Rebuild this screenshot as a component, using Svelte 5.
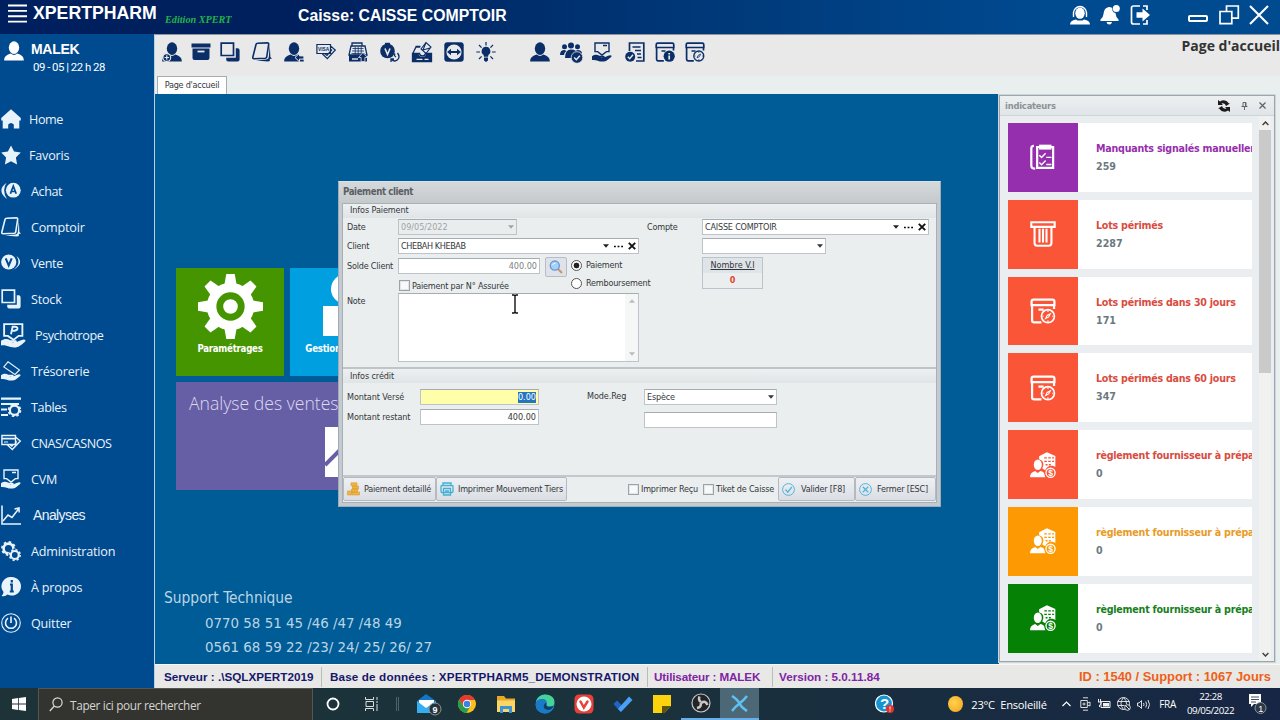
<script lang="ts">
	// All icons are drawn on a 20x20 grid
	const person =
		'<ellipse cx="10" cy="6.600" rx="5.200" ry="6.300"/><path d="M.2 19.600c0-4.300 2.600-5.600 6.600-7 1.800 1.700 4.600 1.700 6.400 0 4 1.400 6.600 2.700 6.600 7z"/>';
	const hand =
		'<path d="M0 14.200c3-2 5.200-1.600 7.400-.4h4c1.800 0 1.600 2-.1 2H8.500c3 1 6.600-2.400 9.600-2.600 1.500 0 2 .8 1 1.700-2.300 1.900-4.700 4.700-8.600 4.700C6 19.600 4.500 17.400 0 18z"/>';
	const stack =
		'<path d="M1.200 1.200h12.300v12.300H1.200z" fill="none" stroke="currentColor" stroke-width="1.700"/><path d="M15.800 6.200h1.800q2 0 2 2v9.400q0 2-2 2H8.200q-2 0-2-2v-1.800h9.600z"/>';
	const book =
		'<path d="M5.500 1.300 15.500.9q1.300 0 1.200 1.200L14.700 15q-.2 1.100-1.500 1.200L2 16.700q-1.500 0-1.200-1.400L4 2.500q.3-1.200 1.500-1.200z" fill="none" stroke="currentColor" stroke-width="1.600"/><path d="m17.800 3 .6 12 1.600 1.600-2.200.3v2.200l-1.800.5-12-1.200 10.600-.8q2.100-.5 2.200-2.600z"/>';
	const card =
		'<path d="M.9 2.500h13.600v9H.9zM14.500 4l4.800 4-8 8.600-5-4.800" fill="none" stroke="currentColor" stroke-width="1.400"/><path d="M1 4.800h13v1.700H1zM3 8.500h4v1H3z"/><path d="m16.500 7-5.500 7-3-2.300h7z"/>';
	const visa =
		'<path d="M.9 2.500h13.600v9H.9zM14.500 4l4.800 4-8 8.600-5-4.800M16 7.500l-5 6-2.500-2" fill="none" stroke="currentColor" stroke-width="1.200"/><text x="2" y="8.800" font-size="4.800" font-weight="bold" font-family="Liberation Sans">VISA</text>';
	const calBox =
		'<path d="M1.200 5.500V2.800q0-1.600 1.600-1.600h14.400q1.600 0 1.600 1.600v2.700zM1.600 5.500v11.600q0 1.700 1.700 1.700h5.500M18.500 5.500v3M6.500 9h4" fill="none" stroke="currentColor" stroke-width="1.700"/>';
	const clock =
		'<circle cx="13.800" cy="14" r="5" fill="none" stroke="currentColor" stroke-width="1.300"/><path d="m12 15.800 1.200-2.400 2.500-1.300-1.300 2.500zM13.800 9.500v1.300M13.800 17.200v1.300M9.500 14h1M17 14h1" fill="none" stroke="currentColor" stroke-width=".8"/>';
	const teeth = [0, 45, 90, 135, 180, 225, 270, 315]
		.map((angle) => `<path d="M8.700 0h2.600l.7 4H8z" transform="rotate(${angle} 10 10)"/>`)
		.join('');
	const cvm =
		'<path d="M3 1h14v8.600h-2.600L10 13 5.600 9.600H3zM11 3.500h4" fill="none" stroke="currentColor" stroke-width="1.400"/>' + hand;
	const supplier =
		'<path d="m7 3.200 6-3 6.500 2.800v8.600a5 5 0 0 0-7.800 2.500L9.500 12.600Q12 7 7 5.500z"/><path d="M11 4.500h2m1 0h2m1 0h1.500M11 7.200h2m1 0h2m1 0h1.500M12 9.800h1.500m1 0H16" stroke="var(--cut)" stroke-width="1.100"/><ellipse cx="6" cy="9.800" rx="3.100" ry="4"/><path d="M0 19.500q0-3.800 4-4.800l2 1.500 2-1.500q3 .6 3 2.300l.8 2.500z"/><circle cx="15.800" cy="16" r="3.500" fill="none" stroke="currentColor" stroke-width="1"/><text x="14" y="18.300" font-size="6.500" font-weight="bold" font-family="Liberation Sans">$</text>';

	const icons: Record<string, string> = {
		menu: '<path d="M0 .5h20v2H0zm0 5.700h20v2H0zm0 5.700h20v2H0zm0 5.700h20v2H0z"/>',
		user: person,
		userPlus:
			person +
			'<circle cx="4.800" cy="15.500" r="3.900" fill="currentColor" stroke="var(--cut)" stroke-width="1.100"/><path d="M2.500 15.500h4.600M4.800 13.200v4.600" stroke="var(--cut)" stroke-width="1.200"/>',
		userBack:
			person +
			'<path d="m11 15.500 4.500-4.200v2.600h4.400v3.200h-4.400v2.700z" stroke="var(--cut)" stroke-width="1"/>',
		archive:
			'<path d="M.5 1.500h19v4H.5zM1.500 6.500h17V16q0 2-2 2h-13q-2 0-2-2z"/><path d="M6.500 9.500h7" stroke="var(--cut)" stroke-width="1.800"/>',
		stack,
		book,
		card,
		visa,
		register:
			'<path d="M4 4V1h10v3M3 4h14l2 9H1z" fill="none" stroke="currentColor" stroke-width="1.300"/><path d="M4.500 6.500h11M4 9h12M3.500 11.500h13M7.200 5v8M10.200 5v8M13.200 5v8" stroke="currentColor" stroke-width=".8"/><path d="M1 13h18v6.500H1z"/><path d="M4 17h6" stroke="var(--cut)" stroke-width="1.400"/><path d="m15 10.500 4.500 5h-2.600v4h-3.800v-4h-2.600z" stroke="var(--cut)" stroke-width=".8"/>',
		coinV:
			'<circle cx="7.500" cy="9" r="7.300"/><path d="M5 .8h5v3H5z"/><path d="m5 6.500 2.500 6 2.500-6" fill="none" stroke="var(--cut)" stroke-width="1.600"/><path d="M17.500 11q3 4 0 6.800t-6.500-.8M11 20v-3h3M15 11.500q-1.500 2 1 3.500" fill="none" stroke="currentColor" stroke-width="1.300"/>',
		drawer:
			'<path d="M3.500 4.500h5M1 11l3-6h4M.5 11.500h7q.5 2.500 3 2.500t3-2.500h6v8H.5z" fill="none" stroke="currentColor" stroke-width="1.300"/><path d="M.5 12h6q1 3 4 3t3.500-3h5.500v7.500H.5z"/><path d="M4.500 17.300h6M12.500 17.300h4" stroke="var(--cut)" stroke-width="1.200"/><path d="m9 7 5-6.500L19 5l-5 6.500zM14 .5 11 8l7-2" fill="none" stroke="currentColor" stroke-width="1.100"/>',
		teamviewer:
			'<rect x=".3" y=".3" width="19.400" height="19.400" rx="3"/><circle cx="10" cy="10" r="7.600" fill="var(--cut)"/><path d="m3 10 4-3.300v2.200h6V6.700l4 3.300-4 3.300v-2.200H7v2.200z"/>',
		bulb: '<path d="M10 4.800a4.400 4.400 0 0 0-2.500 8l.5 2h4l.5-2a4.400 4.400 0 0 0-2.500-8zM8 15.500h4v3l-2 1.500-2-1.500z"/><path d="M10 0v3.500M.3 10H4M16 10h3.700M3 3l2.600 2.600M17 3l-2.600 2.600M3 17l2.600-2.600M17 17l-2.600-2.600" stroke="currentColor" stroke-width="1.200"/>',
		group:
			'<circle cx="10" cy="3.500" r="3"/><circle cx="3.500" cy="4.800" r="2.500"/><circle cx="16.500" cy="4.800" r="2.500"/><path d="M-1 13q0-5 4.500-5l2 1q-2.500 1.500-2.500 4zM21 11.500q0-3.500-4.500-3.500l-2 1q2 1.500 2 3zM4 16q0-8.500 6-8.500t6 5l-5 3.500z"/><circle cx="16" cy="15.500" r="5.800" stroke="var(--cut)" stroke-width=".8"/><path d="m13.200 15.500 2.100 2.200 3.600-4" fill="none" stroke="var(--cut)" stroke-width="1.500"/>',
		cvm,
		listCheck:
			'<path d="M4.500 9V1h14.300v18H11" fill="none" stroke="currentColor" stroke-width="1.700"/><path d="M7.500 5h8M10 8.500h6M12 12h4M12.500 15.500h4" stroke="currentColor" stroke-width="1.500"/><circle cx="5.200" cy="14.800" r="5"/><path d="m2.800 14.800 1.900 2 3.300-4" fill="none" stroke="var(--cut)" stroke-width="1.400"/>',
		calInfo:
			calBox +
			'<circle cx="14.200" cy="14.200" r="5.600"/><path d="M14.200 11v1.500m0 1v4" stroke="var(--cut)" stroke-width="1.700"/>',
		calClock: calBox + clock,
		support:
			'<path d="M3.500 9.500V8a6.500 6.500 0 0 1 13 0v1.500M3.500 7v5M16.500 7v5" fill="none" stroke="currentColor" stroke-width="1.400"/><ellipse cx="10" cy="8.200" rx="4.700" ry="5.600"/><path d="M0 19.500q0-4 6-5l1.500 1h5l1.500-1q6 1 6 5z"/>',
		bell: '<path d="M9 2q-5 .5-5.500 7-.3 4-3 5.500V16h18v-1.500Q15.700 12 15.500 8 12 7.500 12.200 3 11 2 9 2zM6.500 17h5.500q-.5 2.500-2.700 2.500T6.500 17z"/><circle cx="16.300" cy="3.600" r="3.500"/>',
		exit: '<path d="M10 1H3.500Q1.500 1 1.500 3v14q0 2 2 2H10M13 1h4v4M13 19h4v-4" fill="none" stroke="currentColor" stroke-width="1.700"/><path d="M6.500 7.200h6V3.500l7.500 6.500-7.500 6.500v-3.700h-6z"/>',
		restore:
			'<path d="M1 6.500h11.800v12.200H1zM7.500 6V1h11.800v12.200H13" fill="none" stroke="currentColor" stroke-width="1.700"/>',
		close: '<path d="m1 1 18 18M19 1 1 19" stroke="currentColor" stroke-width="2.100"/>',
		home: '<path d="M10 .2 19.800 9v2.500h-1.500v8h-5.500v-4q-2.800-3-5.600 0v4H1.700v-8H.2V9z"/>',
		star: '<path d="m10 .4 3.100 6.200 6.700 1-4.900 4.900 1.200 7-6.100-3.300-6.100 3.300 1.200-7L.2 7.600l6.700-1z"/>',
		achat:
			'<circle cx="12.300" cy="9.200" r="7.400"/><path d="M5.500 1.800Q-5 9.500 6 18 .5 9.500 5.500 1.800z"/><path d="m9.400 12.700 2.900-7.500 2.900 7.500M10.400 10.500h3.800" fill="none" stroke="var(--cut)" stroke-width="1.700"/>',
		vente:
			'<circle cx="7.700" cy="9" r="7.600"/><path d="M15.500 3q9 7.500-4.500 14.500 10-6 4.500-14.500z"/><path d="m4.700 5.400 3 7 3-7" fill="none" stroke="var(--cut)" stroke-width="2"/>',
		psycho:
			'<path d="M2.500.9h14.600v9.400h-3L10 13.500l-4.500-3.200h-3z" fill="none" stroke="currentColor" stroke-width="1.500"/><path d="m8 9 1.300-6h2.200q2.300.3 1.500 2-.7 1.400-4 1.300" fill="none" stroke="currentColor" stroke-width="1.500"/>' +
			hand,
		cash: '<path d="M7 .8 18.500 9l-4.500 4.500L2.800 6z" fill="none" stroke="currentColor" stroke-width="1.100"/>' + hand,
		tables:
			'<path d="M0 .5h20v2.300H0zM0 6h18v2H0zM0 11.500h6v2H0zM0 17h7v2H0z"/><circle cx="13.500" cy="13.300" r="4.600" fill="none" stroke="currentColor" stroke-width="2.200"/><circle cx="13.500" cy="13.300" r="6" fill="none" stroke="currentColor" stroke-width="1.600" stroke-dasharray="2.500 2.210"/>',
		chart:
			'<path d="M1 .5V19h19" fill="none" stroke="currentColor" stroke-width="1.600"/><path d="m2 16 5-6 4 2.500L17.500 4M13.500 4l4.500-1 .2 4.500" fill="none" stroke="currentColor" stroke-width="1.500"/>',
		admin:
			'<circle cx="7.500" cy="7.500" r="4.900" fill="none" stroke="currentColor" stroke-width="2.600"/><circle cx="7.500" cy="7.500" r="6.600" fill="none" stroke="currentColor" stroke-width="1.700" stroke-dasharray="2.600 2.580"/><circle cx="13.800" cy="14" r="6.400" fill="var(--cut)"/><circle cx="13.800" cy="14" r="4" fill="none" stroke="currentColor" stroke-width="2.200"/><circle cx="13.800" cy="14" r="5.400" fill="none" stroke="currentColor" stroke-width="1.500" stroke-dasharray="2.120 2.120"/>',
		info: '<path d="M10.700 0a9.300 9.300 0 1 1-4.200 17.600Q4 20 .5 19q2-1.500 2-4A9.300 9.300 0 0 1 10.700 0z"/><path d="M10.800 3v2.500m-1.800 2h1.800v7m-2 0h4" fill="none" stroke="var(--cut)" stroke-width="2.200"/>',
		power:
			'<circle cx="10" cy="10" r="9.300" fill="none" stroke="currentColor" stroke-width="1.100"/><path d="M7 5.200a5.500 5.500 0 1 0 6 0M10 3.500V10" fill="none" stroke="currentColor" stroke-width="1.600"/>',
		checklist:
			'<path d="M5.500 2.300h12.300v16H5.500zM3 1.500Q1 1.500 1 3.500v13q0 2.500 3 2.500" fill="none" stroke="currentColor" stroke-width="1.700"/><path d="M7 .5h9.500v3.800H7z"/><path d="m7.200 8.700 1.700 1.700L12 7.200m-4.800 7 1.700 1.700 3.100-3.200M12.500 10.300h4M12.500 15.700h4" fill="none" stroke="currentColor" stroke-width="1.100"/>',
		bin: '<path d="M1 1h18v3.500H1zM3.500 5v12q0 2 2 2h9q2 0 2-2V5M7.300 6v10.500M10 6v10.500M12.700 6v10.500" fill="none" stroke="currentColor" stroke-width="1.600"/>',
		supplier,
		gear:
			'<circle cx="10" cy="10" r="7.300"/>' +
			teeth +
			'<circle cx="10" cy="10" r="3.300" fill="none" stroke="var(--cut)" stroke-width="2.100"/>'
	};

	const tools = [
		['userPlus', 0], ['archive', 9], ['stack', 9], ['book', 12], ['userBack', 12], ['visa', 12],
		['register', 12], ['coinV', 12], ['drawer', 12], ['teamviewer', 12], ['bulb', 12],
		['user', 34], ['group', 11], ['cvm', 11], ['listCheck', 13], ['calInfo', 10], ['calClock', 10]
	] as [string, number][];

	const menu = [
		['home', 'Home'], ['star', 'Favoris'], ['achat', 'Achat'], ['book', 'Comptoir'], ['vente', 'Vente'],
		['stack', 'Stock'], ['psycho', 'Psychotrope'], ['cash', 'Trésorerie'], ['tables', 'Tables'],
		['card', 'CNAS/CASNOS'], ['cvm', 'CVM'], ['chart', 'Analyses'], ['admin', 'Administration'],
		['info', 'À propos'], ['power', 'Quitter']
	];

	const indicators = [
		{ icon: 'checklist', label: 'Manquants signalés manuellement', value: 259, tone: 'purple' },
		{ icon: 'bin', label: 'Lots périmés', value: 2287, tone: 'red' },
		{ icon: 'calClock', label: 'Lots périmés dans 30 jours', value: 171, tone: 'red' },
		{ icon: 'calClock', label: 'Lots périmés dans 60 jours', value: 347, tone: 'red' },
		{ icon: 'supplier', label: 'règlement fournisseur à préparer', value: 0, tone: 'red' },
		{ icon: 'supplier', label: 'règlement fournisseur à préparer', value: 0, tone: 'orange' },
		{ icon: 'supplier', label: 'règlement fournisseur à préparer', value: 0, tone: 'green' }
	];

	let mode = $state('Paiement');
</script>

{#snippet icon(name: string, size = 20)}
	<svg class="icon" width={size} height={size} viewBox="0 0 20 20" fill="currentColor">{@html icons[name]}</svg>
{/snippet}

{#snippet arrow()}
	<svg class="arrow" width="6" height="4" viewBox="0 0 6 4"><path d="M0 .3h6L3 3.700z" fill="currentColor" /></svg>
{/snippet}

{#snippet lookup()}
	<span class="lookup">
		{@render arrow()}
		<svg width="9" height="3" viewBox="0 0 9 3"><path d="M0 .7h1.800v1.600H0zm3.600 0h1.800v1.600H3.600zm3.600 0H9v1.600H7.200z" /></svg>
		<svg width="8" height="8" viewBox="0 0 8 8"><path d="m.8.8 6.400 6.400M7.200.8.8 7.200" stroke="#111" stroke-width="1.900" /></svg>
	</span>
{/snippet}

<div class="app">
	<header class="titlebar">
		{@render icon('menu', 19)}
		<strong class="brand">XPERTPHARM</strong>
		<em class="edition">Edition XPERT</em>
		<strong class="caisse">Caisse: CAISSE COMPTOIR</strong>
		<div class="window-actions">
			{@render icon('support')}
			{@render icon('bell')}
			{@render icon('exit')}
			<span class="minimize"></span>
			{@render icon('restore')}
			{@render icon('close')}
		</div>
	</header>

	<div class="body">
		<aside class="sidebar">
			<div class="account">
				{@render icon('user')}
				<div>
					<div class="name">MALEK</div>
					<div class="date">09 - 05 | 22 h 28</div>
				</div>
			</div>
			<nav>
				{#each menu as [name, label]}
					<a class="item item-{name}" href="#{name}">
						{@render icon(name, name === 'psycho' ? 25 : 20)}
						<span>{label}</span>
					</a>
				{/each}
			</nav>
		</aside>

		<main class="main">
			<div class="toolbar">
				{#each tools as [name, gap]}
					<span class="tool" style:margin-left="{gap}px">{@render icon(name)}</span>
				{/each}
				<h1>Page d'accueil</h1>
			</div>
			<div class="tabs"><span class="tab">Page d'accueil</span></div>

			<div class="content">
				<section class="desktop">
					<div class="tiles">
						<div class="tile settings">{@render icon('gear', 65)}<b>Paramétrages</b></div>
						<div class="tile stock">
							<svg width="62" height="65" viewBox="0 0 62 65" fill="#fff"><circle cx="33" cy="15" r="15" /><path d="M10 32h44v30H10z" /></svg>
							<b>Gestion de stock</b>
						</div>
						<div class="tile sales">
							<span>Analyse des ventes</span>
							<svg width="50" height="50" viewBox="0 0 50 50"><path d="M0 0h50v50H0z" fill="#fff" /><path d="m0 38 16-16 12 10L50 8" fill="none" stroke="#675fa6" stroke-width="4" /></svg>
						</div>
					</div>
					<div class="contact">
						<div>Support Technique</div>
						<p>0770 58 51 45 /46 /47 /48 49</p>
						<p>0561 68 59 22 /23/ 24/ 25/ 26/ 27</p>
					</div>
				</section>

				<aside class="indicators">
					<div class="panel-head">
						<b>indicateurs</b>
						<svg width="14" height="12" viewBox="0 0 14 12"><path d="M1 5V0l2 1.500Q8-2 12 3.500h1L9 6Q8 2.500 4.500 3.500L6 5zM13 7v5l-2-1.500Q6 14 2 8.500H1L5 6q1 3.500 4.500 2.500L8 7z" fill="#1c1c1c" /></svg>
						<svg width="7" height="8" viewBox="0 0 7 8"><path d="M2 .5h3v4H2zM.5 4.500h6M3.500 5v3M4.500 1v3" fill="none" stroke="#60666b" /></svg>
						<svg width="7" height="7" viewBox="0 0 7 7"><path d="m.5.5 6 6M6.500.5l-6 6" stroke="#60666b" stroke-width="1.300" /></svg>
					</div>
					<div class="panel-body">
						<div class="cards">
							{#each indicators as item}
								<article class="card {item.tone}">
									<div class="card-icon">{@render icon(item.icon, 26)}</div>
									<div class="card-text">
										<b>{item.label}</b>
										<span>{item.value}</span>
									</div>
								</article>
							{/each}
						</div>
						<div class="scrollbar">
							<svg width="7" height="5" viewBox="0 0 7 5"><path d="m.6 4 2.900-3 2.900 3" fill="none" stroke="#444" stroke-width="1.500" /></svg>
							<span class="thumb"></span>
							<svg width="7" height="5" viewBox="0 0 7 5"><path d="m.6 1 2.900 3 2.900-3" fill="none" stroke="#444" stroke-width="1.500" /></svg>
						</div>
					</div>
				</aside>
			</div>

			<footer class="status">
				<b class="server">Serveur : .\SQLXPERT2019</b>
				<b class="database">Base de données : XPERTPHARM5_DEMONSTRATION</b>
				<b class="login">Utilisateur : MALEK</b>
				<b class="version">Version : 5.0.11.84</b>
				<b class="licence">ID : 1540 / Support : 1067 Jours</b>
			</footer>
		</main>
	</div>

	<footer class="taskbar">
		<span class="start"><svg width="14" height="14" viewBox="0 0 14 14" fill="#fff"><path d="m0 2 6-1v5.600H0zM6.800.9 14 0v6.600H6.800zM0 7.400h6V13l-6-1zM6.800 7.400H14V14l-7.200-1z" /></svg></span>
		<div class="search">
			<svg width="14" height="15" viewBox="0 0 14 15"><circle cx="8.500" cy="5.500" r="4.600" fill="none" stroke="#ddd" stroke-width="1.200" /><path d="M5.300 9 .8 14" stroke="#ddd" stroke-width="1.200" /></svg>
			Taper ici pour rechercher
		</div>
		<span class="slot"><svg width="14" height="14" viewBox="0 0 14 14"><circle cx="7" cy="7" r="5.500" fill="none" stroke="#fff" stroke-width="1.800" /></svg></span>
		<span class="slot"><svg width="14" height="14" viewBox="0 0 14 14" fill="none" stroke="#ddd"><path d="M.5 0v2.500h8V0M.5 14v-2.500h8V14M1 4.500h7.500v5H1zM12 0v3M12 7v7M11 5h2" /></svg></span>
		<span class="divider"></span>
		<span class="slot">
			<svg width="28" height="26" viewBox="0 0 28 26"><path d="m3 10 9-7 10 7v12H3z" fill="#1175c8" /><path d="M5 9h15v8H5z" fill="#fff" /><path d="m3 10 9 7 10-7v12H3z" fill="#35aef1" /><circle cx="21" cy="18" r="6" fill="#25323a" stroke="#8b9499" /><text x="18.500" y="21.500" font-size="9" font-weight="bold" font-family="Liberation Sans" fill="#fff">9</text></svg>
		</span>
		<span class="slot">
			<svg width="18" height="18" viewBox="0 0 18 18"><circle cx="9" cy="9" r="9" fill="#fbc116" /><path d="M1.200 4.500A9 9 0 0 1 17 5H9L5 11z" fill="#e33b2e" /><path d="M1.200 4.500A9 9 0 0 0 8.500 18l4-7-7 .5z" fill="#2a9d48" /><circle cx="9" cy="9" r="4.200" fill="#fff" /><circle cx="9" cy="9" r="3.300" fill="#3f7fe8" /></svg>
		</span>
		<span class="slot">
			<svg width="18" height="17" viewBox="0 0 18 17"><path d="M0 0h7l2 2.500h9V16H0z" fill="#e9a825" /><path d="M0 4.500h18V16H0z" fill="#fcd665" /><path d="M3 17V10h12v7h-3v-4H6v4z" fill="#3b94d9" /></svg>
		</span>
		<span class="slot">
			<svg width="20" height="20" viewBox="0 0 20 20"><circle cx="10" cy="10" r="9.500" fill="#1787cf" /><path d="M1 8Q3 .5 10 .5q9 0 9.500 7.500 0 4.500-5 4.500-3 0-2.500-2Q12.500 5 7 5 3 5 1 8z" fill="#45d39a" /><path d="M.6 11Q1 5 7 5q4.500.5 4.500 4-3.500.5-2.500 4t7 3.500q-2.500 3-6 3Q1 19 .6 11z" fill="#1b79c9" /><path d="M11.500 9q-1.500 3.500 3 3.700l4-.7q-1.500 4-5.500 4-5.500-1-4-5 .5-2 2.500-2z" fill="#123d66" /></svg>
		</span>
		<span class="slot">
			<svg width="20" height="20" viewBox="0 0 20 20"><rect x=".5" y=".5" width="19" height="19" rx="4.500" fill="#e8413b" /><circle cx="10" cy="10" r="7.500" fill="#fff" /><path d="m6.500 7.500 3.300 6 3.700-6" fill="none" stroke="#e8413b" stroke-width="2.500" stroke-linecap="round" /></svg>
		</span>
		<span class="slot">
			<svg width="20" height="18" viewBox="0 0 20 18"><path d="m.5 9 3.500-3.500 5 5L7.500 17z" fill="#2264c5" /><path d="M5 14 16 1.500 19.500 5 8 17z" fill="#4ba0f5" /></svg>
		</span>
		<span class="slot">
			<svg width="18" height="18" viewBox="0 0 18 18"><path d="M0 0h18v18H0z" fill="#fcd20c" /><path d="M9 11h9l-6.500 7H9z" fill="#5b5210" /><path d="m18 11-6.500 7H18z" fill="#1b303e" /></svg>
		</span>
		<span class="slot running">
			<svg width="20" height="20" viewBox="0 0 20 20"><circle cx="10" cy="10" r="9" fill="#242427" stroke="#c7c8ca" stroke-width="1.200" /><path d="M10 9Q7 7 8.500 3.500M9.500 10Q11 14 6 15M10.500 10q4-3 6 2" fill="none" stroke="#c7c8ca" stroke-width="2.500" /></svg>
		</span>
		<span class="slot running active">
			<svg width="17" height="17" viewBox="0 0 17 17"><path d="M1 1q6 4 7.500 7.500Q10 12 16 16M16 1q-4 5-7.500 7.500T1 16" fill="none" stroke="#5ec1f0" stroke-width="2.600" /></svg>
		</span>

		<div class="tray">
			<svg class="help" width="19" height="20" viewBox="0 0 19 20"><circle cx="9" cy="9.500" r="8.500" fill="#1594d1" stroke="#fff" stroke-width="1.200" /><text x="5" y="15" font-size="15" font-weight="bold" font-family="Liberation Sans" fill="#fff">?</text><circle cx="15" cy="15" r="4" fill="#e4322c" /><path d="M15 12.500v3m0 1v1" stroke="#fff" /></svg>
			<span class="sun"></span>
			<span class="weather">23°C&nbsp; Ensoleillé</span>
			<svg width="9" height="6" viewBox="0 0 9 6"><path d="m.5 5 4-4 4 4" fill="none" stroke="#fff" stroke-width="1.200" /></svg>
			<svg class="meet" width="11" height="14" viewBox="0 0 11 14" fill="none" stroke="#ddd"><path d="M3 .8h5M3 13.200h5M.8 3.500h6.500v7H.8zM7.500 6l2.500-1v4L7.500 8" /><circle cx="4" cy="7" r="1" /></svg>
			<svg width="14" height="10" viewBox="0 0 14 10"><path d="M4 2.500h9v6H4zM1.500 0v3M3.500 0v3M1 3h3v2L2.500 6v2" fill="none" stroke="#eee" /><path d="M6 4h6v3.500H6z" fill="#eee" /></svg>
			<svg width="14" height="14" viewBox="0 0 14 14" fill="none" stroke="#ddd"><circle cx="6.500" cy="6.500" r="6" /><path d="M.5 4.500h12M.5 8.500h7M6.500.5q-5 6 0 12M6.500.5q3.500 3 3 6.500" /><circle cx="10.500" cy="10.500" r="2.800" fill="#182a42" /><path d="m8.500 8.500 4 4" /></svg>
			<svg width="14" height="11" viewBox="0 0 14 11" fill="none" stroke="#ddd"><path d="M.5 4H2l2.500-2.500v8L2 7H.5zM6.500 4q1 1.500 0 3M8.700 2.500q2 3 0 6M11 1q3 4.500 0 9" /></svg>
			<span class="lang">FRA</span>
			<div class="clock"><span>22:28</span><span>09/05/2022</span></div>
			<svg class="notice" width="20" height="22" viewBox="0 0 20 22"><path d="M1 1h12v10H6l-3 3v-3H1z" fill="#fff" /><path d="M3 4h8M3 6.500h8M3 9h5" stroke="#44505f" /><circle cx="12.500" cy="15" r="5.500" fill="#2c3844" stroke="#8a939c" /><text x="10.200" y="18.500" font-size="9" font-family="Liberation Sans" fill="#fff">1</text></svg>
		</div>
	</footer>

	<div class="dialog">
		<div class="dialog-title">Paiement client</div>
		<div class="dialog-body">
			<div class="group-title">Infos Paiement</div>
			<div class="payment">
				<div class="left">
					<div class="row"><label for="date">Date</label><div id="date" class="field date-field">09/05/2022 {@render arrow()}</div></div>
					<div class="row"><label for="client">Client</label><div id="client" class="field wide">CHEBAH KHEBAB {@render lookup()}</div></div>
					<div class="balance">
						<div>
							<div class="row">
								<label for="solde">Solde Client</label>
								<div id="solde" class="field amount muted">400.00</div>
								<button class="find" aria-label="Rechercher">
									<svg width="14" height="14" viewBox="0 0 14 14"><path d="m9 9 4 4" stroke="#c99a68" stroke-width="2.300" /><circle cx="5.800" cy="5.600" r="4.600" fill="#a5d1f5" stroke="#6997d5" stroke-width="1.300" /><path d="M3.500 5q1-2 3-1.800" fill="none" stroke="#fff" /></svg>
								</button>
							</div>
							<div class="check insured"><i class="box"></i>Paiement par N° Assurée</div>
						</div>
						<div class="radios">
							{#each ['Paiement', 'Remboursement'] as option}
								<button class="radio" onclick={() => (mode = option)}><i class:on={mode === option}></i>{option}</button>
							{/each}
						</div>
					</div>
					<div class="row note"><label for="note">Note</label>
						<div id="note" class="field memo"><span class="memo-scroll"><i class="up">{@render arrow()}</i>{@render arrow()}</span></div>
					</div>
				</div>
				<div class="right">
					<div class="row"><label for="compte">Compte</label><div id="compte" class="field account-field">CAISSE COMPTOIR {@render lookup()}</div></div>
					<div class="field sub-account">{@render arrow()}</div>
					<div class="counter"><u>Nombre V.I</u><b>0</b></div>
				</div>
			</div>

			<div class="group-title credit-title">Infos crédit</div>
			<div class="credit">
				<div>
					<div class="row"><label for="verse">Montant Versé</label><div id="verse" class="field amount paid"><mark>0.00</mark></div></div>
					<div class="row"><label for="restant">Montant restant</label><div id="restant" class="field amount">400.00</div></div>
				</div>
				<span class="mode-label">Mode.Reg</span>
				<div>
					<div class="field mode">Espèce {@render arrow()}</div>
					<div class="field mode"></div>
				</div>
			</div>

			<div class="actions">
				<button class="detail">
					<svg width="14" height="14" viewBox="0 0 14 14" fill="#f0b43c" stroke="#d99a35" stroke-width=".6"><path d="M4 .8h6v3H4zM5.500 4h6v3h-6zM4.500 7h6v3h-6zM5 10h7.500v3H5zM.5 9h4v4h-4z" /></svg>
					Paiement detaillé
				</button>
				<button class="print">
					<svg width="14" height="14" viewBox="0 0 14 14" fill="none" stroke="#42afd5" stroke-width="1.300"><path d="M3 3V1h8v2M1 4.500q0-1 1-1h10q1 0 1 1v5q0 1-1 1H2q-1 0-1-1z" /><path d="M3.500 6.500h7V13h-7zM5 9h4" /></svg>
					Imprimer Mouvement Tiers
				</button>
				<span class="check receipt"><i class="box"></i>Imprimer Reçu</span>
				<span class="check ticket"><i class="box"></i>Tiket de Caisse</span>
				<button class="submit">
					<svg width="13" height="13" viewBox="0 0 13 13" fill="none" stroke="#55b4dd"><circle cx="6.500" cy="6.500" r="5.900" /><path d="m3.500 6.500 2.300 2.700 4-5.200" stroke-width="1.300" /></svg>
					Valider [F8]
				</button>
				<button class="cancel">
					<svg width="13" height="13" viewBox="0 0 13 13" fill="none" stroke="#55b4dd"><circle cx="6.500" cy="6.500" r="5.900" /><path d="m3.800 3.800 5.400 5.400M9.200 3.800 3.800 9.200" stroke-width="1.300" /></svg>
					Fermer [ESC]
				</button>
			</div>
		</div>
		<svg class="caret" width="8" height="20" viewBox="0 0 8 20"><path d="M1 1h2l1 1 1-1h2M4 2v16M1 19h2l1-1 1 1h2" fill="none" stroke="#111" stroke-width="1.400" /></svg>
	</div>
</div>

<style>
	:global(body) {
		overflow: hidden;
	}

	.app {
		position: relative;
		display: grid;
		grid-template-rows: 34px 654px 32px;
		width: 1280px;
		height: 720px;
		overflow: hidden;
		font-family: 'DejaVu Sans Condensed', 'DejaVu Sans', sans-serif;
		font-size: 9px;
		color: #33373b;

		& * {
			box-sizing: border-box;
		}
	}

	svg {
		display: block;
		flex: none;
	}

	.icon {
		overflow: visible;
	}

	button {
		font: inherit;
		color: inherit;
		letter-spacing: inherit;
		padding: 0;
	}

	.titlebar {
		display: flex;
		padding-left: 8px;
		color: #fff;
		background: linear-gradient(90deg, #001f5e 0, #00205d 300px, #003878 700px, #004a90 1050px);
		font-family: 'Liberation Sans', sans-serif;
		white-space: nowrap;

		& > .icon {
			margin-top: 4px;
		}
	}

	.brand {
		width: 132px;
		margin-left: 6px;
		font-size: 17.7px;
		line-height: 26px;
	}

	.edition {
		width: 133px;
		color: #20b448;
		font: italic bold 10.2px/40px 'Liberation Serif', serif;
	}

	.caisse {
		font-size: 15.8px;
		line-height: 31px;
	}

	.window-actions {
		display: flex;
		align-items: center;
		height: 30px;
		margin-left: auto;
		padding-right: 11px;

		& .icon + .icon {
			margin-left: 10px;
		}
	}

	.minimize {
		width: 20px;
		height: 7px;
		margin: 6px 11px 0 38px;
		border: 2px solid #fff;
		border-radius: 2px;
	}

	.body {
		display: grid;
		grid-template-columns: 154px 1126px;
	}

	.sidebar {
		--cut: #004a8f;
		color: #fff;
		background: #004a8f;
	}

	.account {
		display: flex;
		gap: 7px;
		height: 67px;
		padding: 7px 0 0 4px;
		font-family: 'Liberation Sans', sans-serif;
	}

	.name {
		font-size: 14px;
		font-weight: bold;
		line-height: 17px;
		letter-spacing: -0.3px;
	}

	.date {
		padding-left: 2px;
		font: 11.4px/19px Roboto, sans-serif;
		letter-spacing: -0.5px;
	}

	.item {
		display: flex;
		align-items: center;
		gap: 10px;
		height: 36px;
		padding-left: 1px;
		color: #e8f3fb;
		text-decoration: none;
		font: 12.6px 'Open Sans', sans-serif;
		letter-spacing: -0.2px;
	}

	.item-home,
	.item-star {
		gap: 8px;
	}

	.item-home,
	.item-achat,
	.item-tables,
	.item-vente {
		letter-spacing: -0.4px;
	}

	.item-card {
		letter-spacing: -0.5px;
	}

	.item-psycho {
		gap: 9px;
		letter-spacing: -0.45px;
	}

	.item-chart {
		gap: 12px;
		font: 14px 'Liberation Sans', sans-serif;
		letter-spacing: -0.6px;
	}

	.main {
		display: grid;
		grid-template-rows: 41px 18px 570px 24px;
		background: #e8e9e8;
		border-left: 1px solid #b9d2e2;
		border-top: 1px solid #8e949e;
	}

	.toolbar {
		--cut: #e8e9e8;
		display: flex;
		padding: 7px 0 0 7px;
		color: #0c2e68;

		& h1 {
			margin: -6px 0 0 auto;
			color: #333;
			font: bold 14px/20px 'Open Sans', sans-serif;
		}
	}

	.tabs {
		padding-left: 2px;
		background: #e9eeef;
	}

	.tab {
		display: block;
		width: 70px;
		height: 18px;
		border: 1px solid #a6acb0;
		border-bottom: 0;
		background: #fff;
		line-height: 17px;
		text-align: center;
		letter-spacing: -0.25px;
	}

	.content {
		display: grid;
		grid-template-columns: 844px 276px;
		background: #e9eeef;
	}

	.desktop {
		background: #005c96;
		padding: 174px 0 0 21px;
	}

	.tiles {
		display: grid;
		grid-template-columns: 108px 108px;
		grid-template-rows: 108px 108px;
		gap: 6px;
		color: #fff;
	}

	.tile {
		display: flex;
		flex-direction: column;
		align-items: center;
		padding-top: 6px;
		font-size: 9.6px;

		& b {
			margin-top: 3px;
			line-height: 14px;
			letter-spacing: -0.25px;
		}
	}

	.settings {
		--cut: #459500;
		background: #459500;
	}

	.stock {
		background: #009fe0;
	}

	.sales {
		grid-column: span 2;
		align-items: flex-start;
		padding: 9px 13px;
		background: #675fa6;

		& span {
			color: #dddaf0;
			font: 300 17.6px/25px 'Open Sans', sans-serif;
			white-space: nowrap;
		}

		& svg {
			margin: 11px 0 0 136px;
		}
	}

	.contact {
		margin: 97px 0 0 -12px;
		color: #b9d5e5;
		font-size: 15.4px;
		line-height: 22px;

		& p {
			margin: 4px 0 0 41px;
			font-size: 14.9px;
			line-height: 21px;
		}

		& p + p {
			margin-top: 3px;
		}
	}

	.indicators {
		height: 567px;
		margin-top: 1px;
		border: 1px solid #9aa7ae;
		outline: 1px solid #ced5d8;
		background: #eaeef1;
	}

	.panel-head {
		display: flex;
		align-items: center;
		height: 20px;
		padding: 0 8px 0 5px;
		border-bottom: 1px solid #cdd5da;
		background: linear-gradient(#edf0f1, #e0e5e8);
		color: #8c9296;
		font-size: 9.3px;
		letter-spacing: -0.2px;

		& b {
			margin-right: auto;
		}

		& svg + svg {
			margin-left: 10px;
		}

		& svg:last-child {
			margin-left: 11px;
		}
	}

	.panel-body {
		display: flex;
		height: 545px;
	}

	.cards {
		display: grid;
		align-content: start;
		gap: 8px;
		width: 252px;
		padding: 7px 0 0 8px;
	}

	.card {
		display: flex;
		width: 244px;
		height: 68.8px;
		background: #fff;
		color: var(--tone);
		overflow: hidden;

		&.purple {
			--tone: #952fad;
			--fill: #952fad;
		}

		&.red {
			--tone: #d94c40;
			--fill: #fb5537;
		}

		&.orange {
			--tone: #e99b26;
			--fill: #fc9903;
		}

		&.green {
			--tone: #168020;
			--fill: #058205;
		}
	}

	.card-icon {
		--cut: var(--fill);
		display: grid;
		flex: none;
		place-items: center;
		width: 70px;
		background: var(--fill);
		color: #fff;
	}

	.card-text {
		padding: 16px 0 0 18px;
		font-size: 10.6px;
		font-weight: bold;
		line-height: 18px;
		letter-spacing: -0.22px;
		white-space: nowrap;

		& b {
			display: block;
		}

		& span {
			display: block;
			color: #6b7880;
			letter-spacing: 0;
		}
	}

	.scrollbar {
		display: flex;
		flex-direction: column;
		align-items: center;
		width: 12px;
		margin-left: 7px;
		padding: 5px 0 4px;
		background: #f1f1ef;
	}

	.thumb {
		width: 12px;
		height: 243px;
		margin: 4px 0 auto;
		background: #cacaca;
	}

	.status {
		display: flex;
		align-items: center;
		padding: 0 9px;
		background: #e8e9e6;
		border-top: 1px solid #f6f6f4;
		color: #17176c;
		font: 11.7px/20px 'Liberation Sans', sans-serif;
		white-space: nowrap;

		& .server {
			width: 158px;
			border-right: 1px solid #bbb;
		}

		& .database {
			width: 326px;
			padding-left: 8px;
			border-right: 1px solid #bbb;
			letter-spacing: 0.13px;
		}

		& .login {
			width: 125px;
			padding-left: 6px;
			border-right: 1px solid #bbb;
			color: #8023a5;
			letter-spacing: -0.15px;
		}

		& .version {
			padding-left: 6px;
			color: #8023a5;
		}

		& .licence {
			margin-left: auto;
			color: #ef6017;
			font-size: 12.9px;
		}
	}

	.taskbar {
		display: flex;
		background: linear-gradient(90deg, #1d3338, #1a323c 50%, #172644);
		color: #fff;
		font: 11.5px 'Open Sans', sans-serif;
	}

	.start {
		display: grid;
		place-items: center;
		width: 38px;
	}

	.search {
		display: flex;
		align-items: center;
		gap: 7px;
		width: 275px;
		padding-left: 10px;
		border: 1px solid #55564f;
		border-bottom: 0;
		background: #33332f;
		color: #d5d5d2;
		font-size: 11.8px;
		letter-spacing: -0.33px;
	}

	.slot {
		display: grid;
		place-items: center;
		width: 39px;
	}

	.running {
		border-bottom: 2px solid #68aee8;
	}

	.active {
		background: #4c6775;
	}

	.divider {
		width: 3px;
		height: 14px;
		margin: 9px 9px 0 5px;
		border-inline: 1px solid #506269;
	}

	.tray {
		display: flex;
		align-items: center;
		margin-left: auto;
		padding-right: 12px;
		white-space: nowrap;

		& svg + svg {
			margin-left: 6px;
		}

		& .meet {
			margin-left: 9px;
		}
	}

	.sun {
		width: 15px;
		height: 16px;
		margin: 0 8px 0 54px;
		border-radius: 50%;
		background: radial-gradient(circle at 40% 40%, #ffd34d, #f6a01b);
	}

	.weather {
		width: 91px;
		font-size: 11.2px;
		letter-spacing: -0.25px;
	}

	.lang {
		margin-left: 8px;
		font-size: 10px;
		letter-spacing: -0.3px;
	}

	.clock {
		width: 47px;
		margin: 0 14px 0 11px;
		font-size: 9.8px;
		line-height: 14.5px;
		letter-spacing: -0.5px;
		text-align: center;

		& span {
			display: block;
		}
	}

	.dialog {
		position: absolute;
		left: 338px;
		top: 181px;
		width: 603px;
		height: 326px;
		padding: 0 3px 4px;
		border: 1px solid #9fabb5;
		border-top-color: #d7e2e9;
		background: #c3cad0;
		letter-spacing: -0.2px;
		white-space: nowrap;
	}

	.dialog-title {
		height: 21px;
		margin: 0 -3px;
		padding-left: 4px;
		background: linear-gradient(#d5d9dc, #c4c9cc);
		color: #5c6064;
		font-weight: bold;
		font-size: 9.6px;
		line-height: 20px;
		letter-spacing: -0.4px;
	}

	.dialog-body {
		height: 300px;
		border: 1px solid #a9b0b5;
		background: #eaeeee;
	}

	.group-title {
		height: 14px;
		padding-left: 7px;
		background: linear-gradient(#edf0f1, #dfe4e6);
		line-height: 13px;
		letter-spacing: -0.1px;
	}

	.payment {
		display: flex;
		height: 149px;
	}

	.left {
		width: 304px;
		padding-top: 1px;

		& > .row {
			height: 19px;
		}
	}

	.row {
		display: flex;
		padding-left: 4px;
		line-height: 16px;
	}

	.left .row label {
		flex: none;
		width: 51px;
	}

	.field {
		display: flex;
		align-items: center;
		justify-content: space-between;
		height: 16px;
		padding: 0 2px;
		border: 1px solid #bdc3c8;
		border-top-color: #a5acb2;
		background: #fff;
		line-height: 14px;
	}

	.date-field {
		width: 119px;
		background: #eaedee;
		color: #a0a4a7;
		letter-spacing: 0;
	}

	.wide {
		width: 241px;
		letter-spacing: -0.4px;
	}

	.lookup {
		display: flex;
		align-items: center;
		gap: 5px;
		color: #222;
	}

	.balance {
		display: flex;
		margin-top: 1px;

		& .row {
			height: 20px;
		}
	}

	.balance .amount {
		width: 142px;
	}

	.amount {
		justify-content: flex-end;
		letter-spacing: 0;
	}

	.muted {
		color: #7c8185;
	}

	.find {
		display: grid;
		place-items: center;
		width: 22px;
		height: 20px;
		margin: -1px 0 0 5px;
		border: 1px solid #b7bdc5;
		border-radius: 2px;
		background: #dfe3e9;
	}

	.check {
		display: flex;
		align-items: center;
		gap: 2px;
	}

	.insured {
		height: 15px;
		padding-left: 56px;
	}

	.box {
		flex: none;
		width: 11px;
		height: 11px;
		border: 1px solid #9ca2a7;
		background: #f7f9fa;
		box-shadow: inset 0 0 0 1px #e2e6e8;
	}

	.radios {
		margin-left: 4px;
	}

	.radio {
		display: flex;
		align-items: center;
		gap: 4px;
		height: 18px;
		margin-top: -2px;
		border: 0;
		background: none;

		& + & {
			margin-top: 0;
		}

		& i {
			width: 11px;
			height: 11px;
			border: 1px solid #555;
			border-radius: 50%;
			background: #fff;
		}

		& i.on {
			background: radial-gradient(circle, #222 0 2.6px, #fff 3.2px);
		}
	}

	.left .note {
		height: 70px;
	}

	.memo {
		width: 241px;
		height: 69px;
		padding: 0;
		align-items: stretch;
	}

	.memo-scroll {
		display: flex;
		flex-direction: column;
		justify-content: space-between;
		align-items: center;
		width: 13px;
		margin-left: auto;
		padding: 5px 0;
		background: #f5f6f6;
		color: #b6bbbe;
	}

	.up {
		transform: scaleY(-1);
	}

	.right {
		padding-top: 1px;

		& .row {
			height: 19px;
			padding: 0;
		}

		& label {
			width: 55px;
		}
	}

	.account-field {
		width: 227px;
	}

	.sub-account {
		width: 124px;
		margin-left: 55px;
		justify-content: flex-end;
	}

	.counter {
		display: grid;
		grid-template-rows: 15px 16px;
		width: 61px;
		height: 32px;
		margin: 3px 0 0 55px;
		border: 1px solid #bcc4cb;
		text-align: center;
		line-height: 14px;
		letter-spacing: 0;

		& u {
			background: #dee4e8;
			text-underline-offset: 1px;
		}

		& b {
			color: #e6432e;
		}
	}

	.credit-title {
		height: 16px;
		border-top: 2px solid #bec4c8;
		line-height: 14px;
	}

	.credit {
		display: flex;
		height: 92px;
		padding-top: 6px;

		& .row {
			height: 20px;
		}

		& label {
			width: 73px;
			letter-spacing: -0.1px;
		}

		& .amount {
			width: 119px;
		}
	}

	.credit .paid {
		background: #ffffa9;
	}

	mark {
		background: #2476c2;
		color: #fff;
		line-height: 11px;
	}

	.mode-label {
		width: 57px;
		margin-left: 48px;
		line-height: 15px;
		letter-spacing: -0.1px;
	}

	.mode {
		width: 133px;
		margin-bottom: 7px;
	}

	.actions {
		display: flex;
		height: 26px;
		border-top: 2px solid #c2c8cc;

		& button {
			display: flex;
			flex: none;
			align-items: center;
			height: 24px;
			padding-left: 3px;
			border: 1px solid #b4bac0;
			border-radius: 2px;
			background: linear-gradient(#eef0f3, #dadee4);
		}
	}

	.actions .detail {
		gap: 3px;
		width: 93px;
	}

	.actions .print {
		gap: 4px;
		width: 131px;
	}

	.receipt {
		width: 75px;
		margin-left: auto;
	}

	.ticket {
		width: 75px;
	}

	.actions .submit {
		gap: 6px;
		width: 77px;
	}

	.actions .cancel {
		gap: 5px;
		width: 81px;
	}

	.caret {
		position: absolute;
		left: 172px;
		top: 112px;
	}
</style>
